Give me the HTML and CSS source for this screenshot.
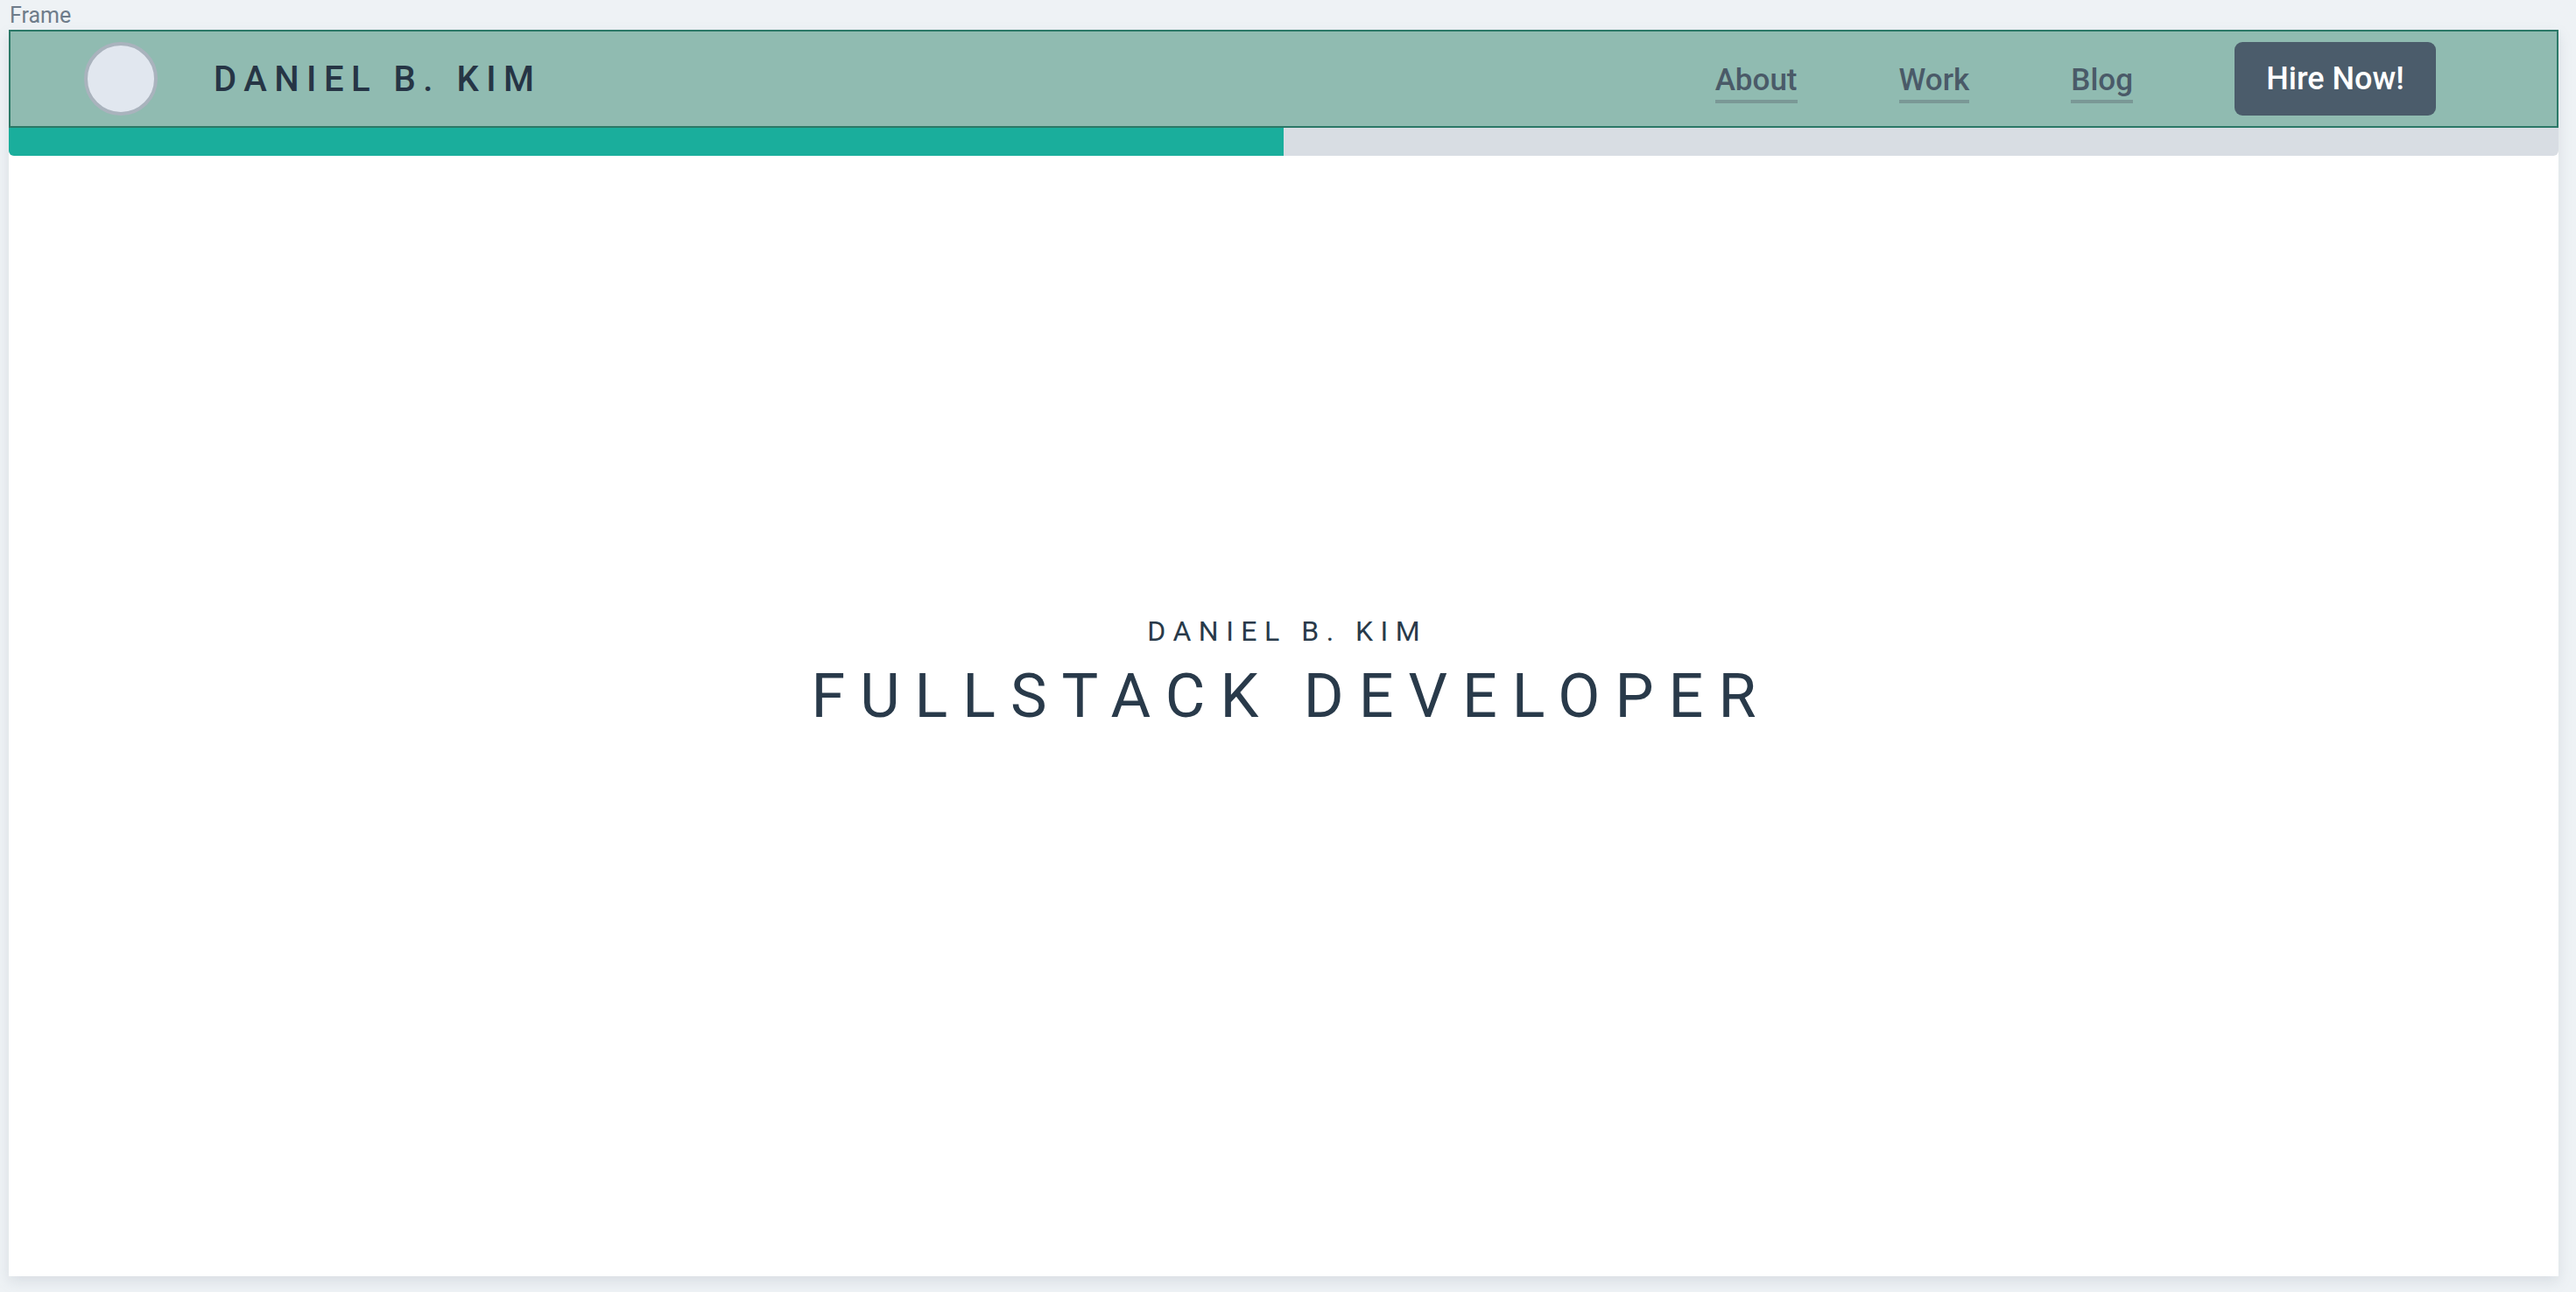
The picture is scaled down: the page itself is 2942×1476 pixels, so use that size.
FILE: index.html
```html
<!DOCTYPE html>
<html lang="en">
<head>
<meta charset="utf-8">
<title>Daniel B. Kim</title>
<link rel="stylesheet" href="styles.css">
</head>
<body>
<div class="frame-label">Frame</div>
<div class="frame">
  <header class="topbar">
    <div class="brand">
      <div class="avatar"></div>
      <span class="brand-name">DANIEL B. KIM</span>
    </div>
    <nav class="nav">
      <a class="nav-link" href="#">About</a>
      <a class="nav-link" href="#">Work</a>
      <a class="nav-link" href="#">Blog</a>
      <a class="hire" href="#">Hire Now!</a>
    </nav>
  </header>
  <div class="progress"><div class="progress-fill" style="width:50%"></div></div>
  <main class="hero">
    <div class="hero-sub">DANIEL B. KIM</div>
    <h1 class="hero-title">FULLSTACK DEVELOPER</h1>
  </main>
</div>
</body>
</html>
```
FILE: styles.css
```css
* { box-sizing: border-box; }
html, body { margin: 0; padding: 0; }
body {
  background: #eef2f5;
  font-family: Roboto, "Liberation Sans", sans-serif;
  width: 2942px;
  height: 1476px;
  overflow: hidden;
}
.frame-label {
  height: 34px;
  padding: 5px 0 0 11px;
  font-size: 25px;
  line-height: 26px;
  color: #6e7c8a;
}
.frame {
  margin-left: 10px;
  width: 2912px;
  height: 1424px;
  background: #ffffff;
  display: flex;
  flex-direction: column;
  box-shadow: 0 6px 14px rgba(120, 135, 150, 0.18);
}
.topbar {
  height: 112px;
  background: #90bbb1;
  border: 2px solid #2b7867;
  display: flex;
  align-items: center;
  justify-content: space-between;
  padding: 0 138px 0 84px;
}
.brand {
  display: flex;
  align-items: center;
  gap: 64px;
}
.avatar {
  width: 84px;
  height: 84px;
  border-radius: 50%;
  background: #e1e7ef;
  border: 4px solid #a9b3bd;
}
.brand-name {
  font-size: 40px;
  letter-spacing: 8.5px;
  color: #263545;
  font-weight: 500;
}
.nav {
  display: flex;
  align-items: center;
  gap: 116px;
}
.nav-link {
  font-size: 35px;
  font-weight: 500;
  color: #4a5a68;
  text-decoration: none;
  border-bottom: 4px solid #7a9896;
  padding-bottom: 2px;
  line-height: 40px;
  margin-top: 9px;
}
.hire {
  width: 230px;
  height: 84px;
  border-radius: 9px;
  background: #4b5c6b;
  color: #ffffff;
  font-size: 36px;
  font-weight: 500;
  text-decoration: none;
  display: flex;
  align-items: center;
  justify-content: center;
}
.progress {
  height: 32px;
  background: #d8dde3;
  border-radius: 0 0 6px 6px;
  overflow: hidden;
}
.progress-fill {
  height: 100%;
  background: #1aae9c;
}
.hero {
  flex: 1;
  display: flex;
  flex-direction: column;
  align-items: center;
  justify-content: center;
  padding-bottom: 100px;
  color: #293a4a;
}
.hero-sub {
  font-size: 32px;
  font-weight: 400;
  letter-spacing: 8.5px;
  line-height: 40px;
  margin-right: -8.5px;
}
.hero-title {
  margin: 14px 0 0;
  font-size: 70px;
  font-weight: 400;
  letter-spacing: 17px;
  line-height: 80px;
  margin-right: -17px;
}
```
